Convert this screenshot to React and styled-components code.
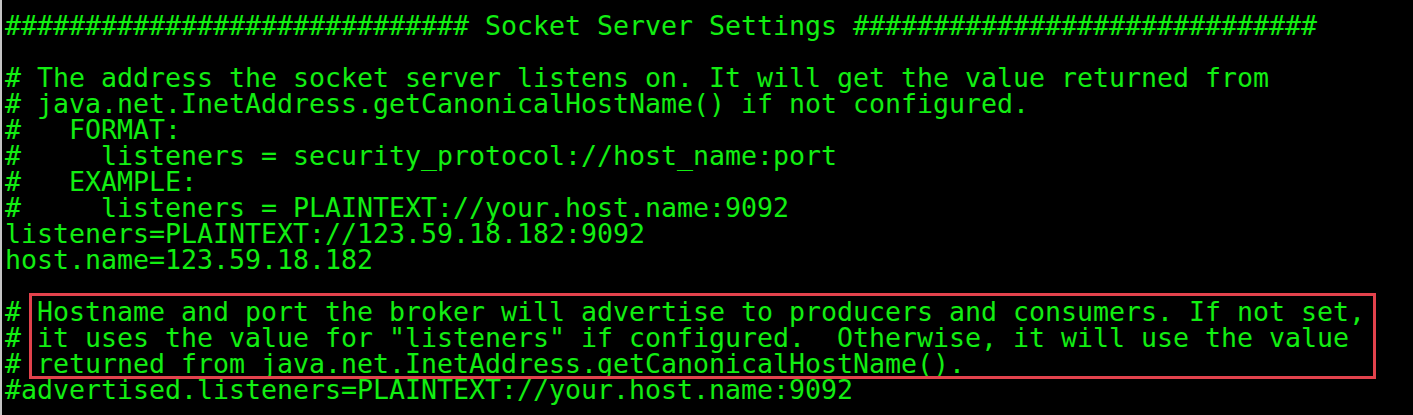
import React from "react";
import styled, { createGlobalStyle } from "styled-components";

const GlobalStyle = createGlobalStyle`
  html, body {
    margin: 0;
    padding: 0;
    background: #000;
  }
`;

const Terminal = styled.div`
  position: relative;
  width: 1413px;
  height: 415px;
  box-sizing: border-box;
  background: #000;
  border-left: 2px solid #c4c4c4;
  padding: 13px 0 0 3px;
  overflow: hidden;
`;

const Screen = styled.pre`
  margin: 0;
  font-family: "DejaVu Sans Mono", "Liberation Mono", monospace;
  font-size: 26.58px;
  line-height: 26px;
  color: #12ee12;
  white-space: pre;
`;

const Line = styled.div`
  height: 26px;
`;

const Highlight = styled.div`
  position: absolute;
  left: 27px;
  top: 293px;
  width: 1347px;
  height: 86px;
  box-sizing: border-box;
  border: 3px solid #e2424c;
  pointer-events: none;
`;

const lines = [
  "############################# Socket Server Settings #############################",
  "",
  "# The address the socket server listens on. It will get the value returned from",
  "# java.net.InetAddress.getCanonicalHostName() if not configured.",
  "#   FORMAT:",
  "#     listeners = security_protocol://host_name:port",
  "#   EXAMPLE:",
  "#     listeners = PLAINTEXT://your.host.name:9092",
  "listeners=PLAINTEXT://123.59.18.182:9092",
  "host.name=123.59.18.182",
  "",
  "# Hostname and port the broker will advertise to producers and consumers. If not set,",
  '# it uses the value for "listeners" if configured.  Otherwise, it will use the value',
  "# returned from java.net.InetAddress.getCanonicalHostName().",
  "#advertised.listeners=PLAINTEXT://your.host.name:9092",
];

export default function App() {
  return (
    <>
      <GlobalStyle />
      <Terminal>
        <Screen>
          {lines.map((text, i) => (
            <Line key={i}>{text}</Line>
          ))}
        </Screen>
        <Highlight />
      </Terminal>
    </>
  );
}
